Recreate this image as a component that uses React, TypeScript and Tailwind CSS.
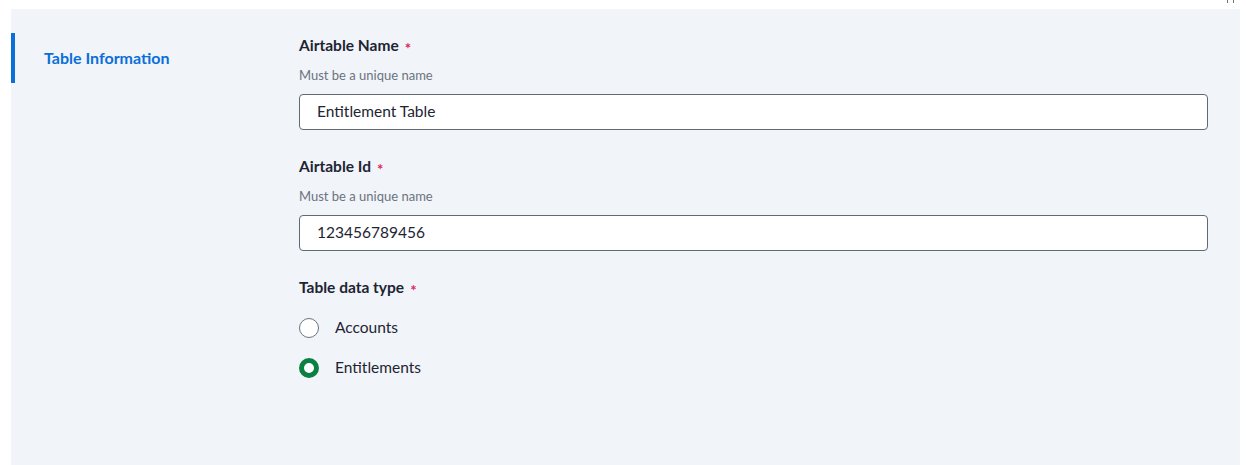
export default function App() {
  const font = { fontFamily: '"Source Sans Pro", Lato, "Noto Sans", sans-serif' };
  return (
    <div className="w-[1246px] h-[465px] bg-white pt-[9px] pl-[11px] pr-[6px] relative" style={font}>
      <div className="absolute right-[12px] top-0 flex gap-[5px]">
        <div className="w-[1px] h-[3px] bg-gray-500" />
        <div className="w-[1px] h-[3px] bg-gray-500" />
      </div>
      <div className="h-[456px] bg-[#f1f4f8] flex">
        {/* Section nav */}
        <div className="w-[288px] pt-[24px]">
          <div className="border-l-4 border-[#0a6fd8] h-[50px] flex items-center pl-[29px]">
            <span className="text-[16px] font-bold text-[#0a6fd8]">Table Information</span>
          </div>
        </div>
        {/* Form */}
        <div className="w-[909px] pt-[26px]">
          <Field label="Airtable Name" value="Entitlement Table" />
          <Field label="Airtable Id" value="123456789456" />
          <div>
            <Label text="Table data type" />
            <div className="mt-[19px] flex flex-col gap-[20px]">
              <Radio label="Accounts" />
              <Radio label="Entitlements" checked />
            </div>
          </div>
        </div>
      </div>
    </div>
  );
}

function Label({ text }: { text: string }) {
  return (
    <div className="flex items-center h-[22px] text-[15.5px] font-bold text-[#1d2433]">
      {text}
      <span className="text-[#e0245e] text-[15px] leading-none ml-[6px] font-bold relative top-[2px]">*</span>
    </div>
  );
}

function Field({ label, value }: { label: string; value: string }) {
  return (
    <div className="mb-[26px]">
      <Label text={label} />
      <p className="mt-[10px] text-[13px] leading-[16px] text-[#6b7380]">Must be a unique name</p>
      <div className="mt-[11px] h-[36px] bg-white border border-[#5f6a78] rounded-[4px] flex items-center px-[17px] text-[15.5px] text-[#1d2433]">
        {value}
      </div>
    </div>
  );
}

function Radio({ label, checked = false }: { label: string; checked?: boolean }) {
  return (
    <div className="flex items-center h-[20px]">
      {checked ? (
        <div className="w-[20px] h-[20px] rounded-full border-[5px] border-[#0b8043] bg-white" />
      ) : (
        <div className="w-[20px] h-[20px] rounded-full border border-[#6b7380] bg-white" />
      )}
      <span className="ml-[16px] text-[15.5px] text-[#1d2433]">{label}</span>
    </div>
  );
}
